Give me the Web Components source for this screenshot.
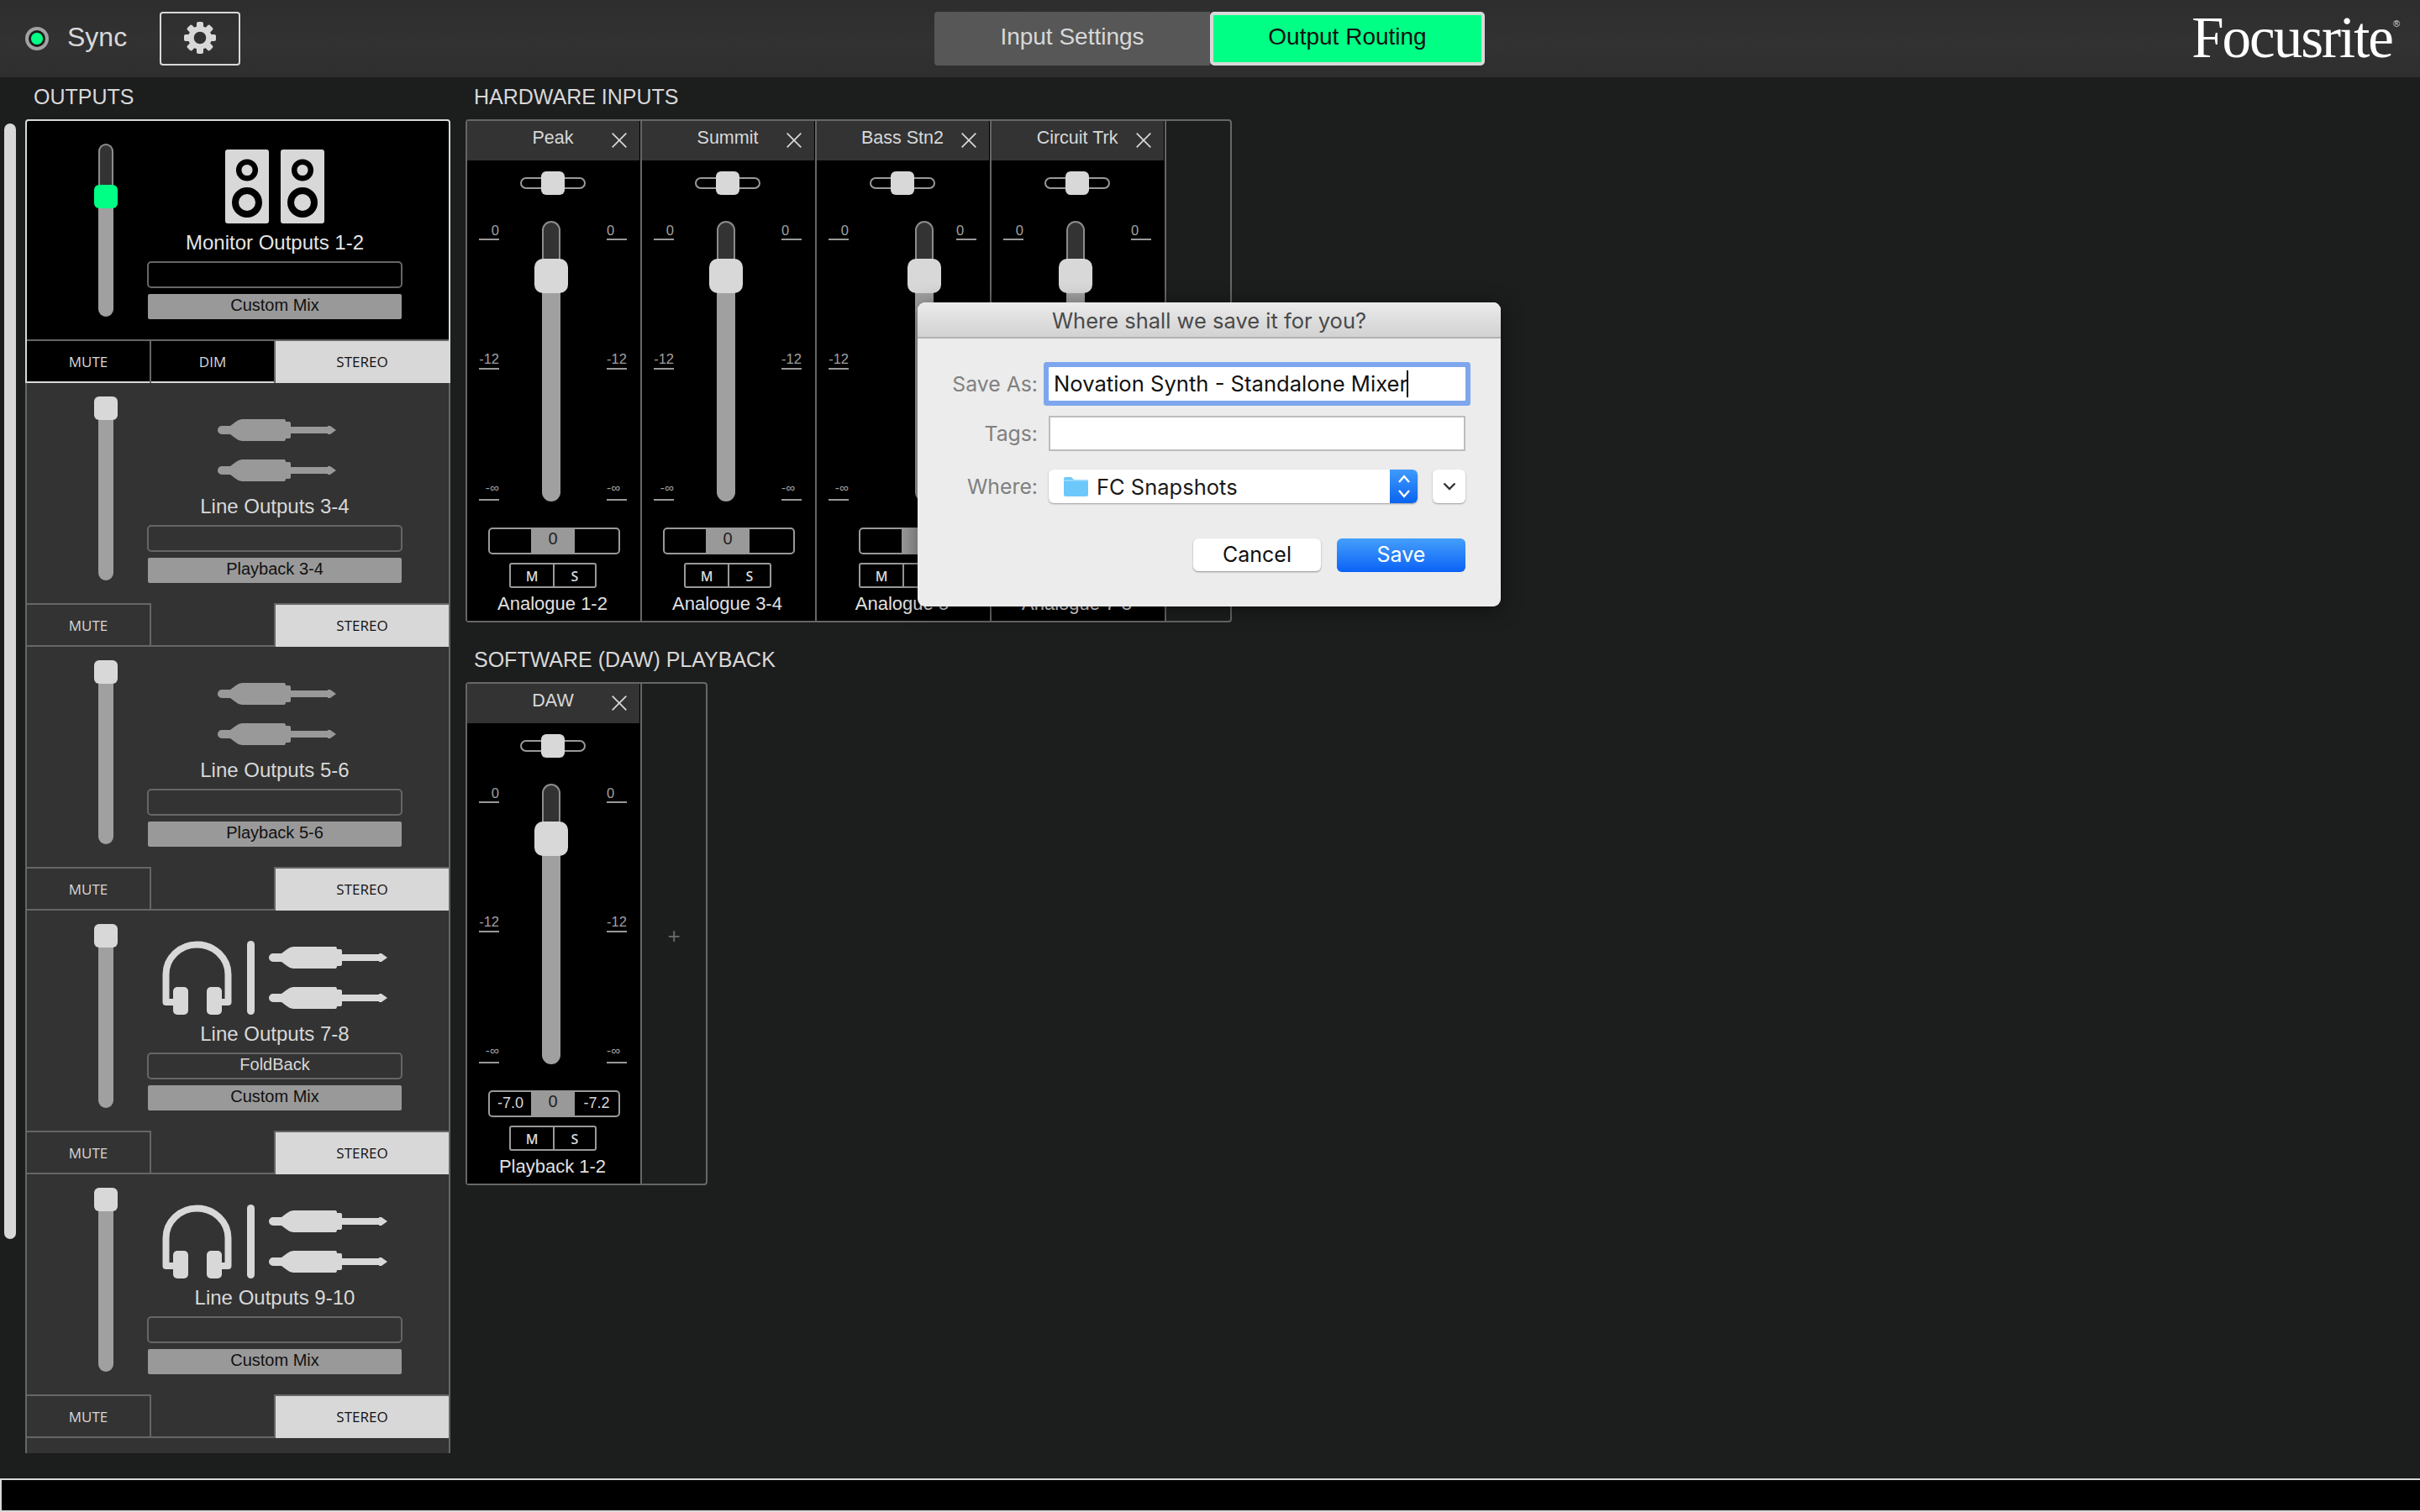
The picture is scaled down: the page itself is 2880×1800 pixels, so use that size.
<!DOCTYPE html>
<html lang="en">
<head>
<meta charset="utf-8">
<title>Focusrite Control</title>
<style>
html,body{margin:0;padding:0;background:#1c1d1d;}
body{width:2880px;height:1800px;overflow:hidden;position:relative;display:flex;flex-direction:column;font-family:"Liberation Sans",Arial,sans-serif;color:#d8d8d8;}
</style>
</head>
<body>
<fc-header></fc-header>
<fc-main>
  <fc-scroll slot="scroll"></fc-scroll>
  <fc-outputs slot="outputs">
    <fc-output name="Monitor Outputs 1-2" mix="Custom Mix" icon="speakers" selected thumb="49"></fc-output>
    <fc-output name="Line Outputs 3-4" mix="Playback 3-4" icon="jacks" dim></fc-output>
    <fc-output name="Line Outputs 5-6" mix="Playback 5-6" icon="jacks" dim></fc-output>
    <fc-output name="Line Outputs 7-8" mix="Custom Mix" box="FoldBack" icon="both"></fc-output>
    <fc-output name="Line Outputs 9-10" mix="Custom Mix" icon="both"></fc-output>
    <fc-output blank></fc-output>
  </fc-outputs>
  <fc-section slot="right" title="HARDWARE INPUTS" tail="76">
    <fc-channel name="Peak" label="Analogue 1-2"></fc-channel>
    <fc-channel name="Summit" label="Analogue 3-4"></fc-channel>
    <fc-channel name="Bass Stn2" label="Analogue 5" shift="28" balshift="25" covered="right"></fc-channel>
    <fc-channel name="Circuit Trk" label="Analogue 7-8" covered="all"></fc-channel>
  </fc-section>
  <fc-section slot="right" title="SOFTWARE (DAW) PLAYBACK" tail="76" add gap="71">
    <fc-channel name="DAW" label="Playback 1-2" lval="-7.0" rval="-7.2"></fc-channel>
  </fc-section>
</fc-main>
<fc-footer></fc-footer>
<fc-dialog></fc-dialog>

<script>
const GEAR = `<svg width="38" height="38" viewBox="-19 -19 38 38" fill="#d8d8d8">
  ${[0,45,90,135,180,225,270,315].map(a=>`<rect x="-4" y="-19" width="8" height="10" rx="2" transform="rotate(${a})"/>`).join('')}
  <circle r="10.6" fill="none" stroke="#d8d8d8" stroke-width="6.6"/></svg>`;
const JACK = c => `<svg width="141" height="26" viewBox="0 0 141 26" fill="${c}"><path d="M5 8H15L21 3.5Q25 0 29 0H79Q81 0 81 3H85Q87 3 87 5V9H131V8H134L141 13L134 18H131V17H87V21Q87 23 85 23H81Q81 26 79 26H29Q25 26 21 22.5L15 18H5A5 5 0 0 1 5 8Z"/></svg>`;
const SPEAKER = `<svg width="52" height="88" viewBox="0 0 52 88"><rect width="52" height="88" rx="3" fill="#d8d8d8"/>
  <circle cx="26" cy="24.500" r="9.800" fill="#d8d8d8" stroke="#000" stroke-width="6.500"/>
  <circle cx="26" cy="63" r="14" fill="#d8d8d8" stroke="#000" stroke-width="8"/></svg>`;
const PHONES = `<svg width="83" height="88" viewBox="0 0 83 88" fill="#d8d8d8"><path d="M18 73H4.500V40A37 35.500 0 0 1 78.500 40V73H65" fill="none" stroke="#d8d8d8" stroke-width="8" stroke-linejoin="round"/>
  <rect x="13" y="55" width="18" height="33" rx="5"/><rect x="53" y="55" width="18" height="33" rx="5"/></svg>`;
const CLOSE = `<svg width="18" height="18" viewBox="0 0 18 18" stroke="#d8d8d8" stroke-width="1.700" fill="none"><path d="M0.700 0.700L17.300 17.300M17.300 0.700L0.700 17.300"/></svg>`;

class Base extends HTMLElement{
  constructor(){super();this.attachShadow({mode:'open'});}
  connectedCallback(){this.shadowRoot.innerHTML=this.render();}
  a(n,d=''){return this.hasAttribute(n)?this.getAttribute(n):d;}
}

customElements.define('fc-header',class extends Base{render(){return `<style>
:host{display:grid;grid-template-columns:1112px 655px 1fr;height:92px;flex:none;background:linear-gradient(#2d2d2d,#323232 55%,#2e2e2e);font-family:"Liberation Sans",Arial,sans-serif;}
.left{display:flex;align-items:center;padding-left:30px;}
.led{box-sizing:border-box;width:28px;height:28px;border-radius:50%;border:4px solid #a2a2a2;background:radial-gradient(circle,#00ff85 6.500px,#1d1d1d 7.500px);}
.sync{font-size:32px;color:#d8d8d8;margin:-4px 0 0 22px;width:110px;}
.gear{box-sizing:border-box;width:96px;height:64px;border:2px solid #d8d8d8;border-radius:4px;display:flex;align-items:center;justify-content:center;margin-top:-1px;}
.gear svg{margin-left:-1px;margin-top:-1px;}
.tabs{display:grid;grid-template-columns:328px 327px;height:64px;align-self:center;margin-top:-1px;}
.tab{display:flex;align-items:center;justify-content:center;font-size:28px;padding-bottom:3px;box-sizing:border-box;}
.in{background:#575757;color:#d8d8d8;border-radius:4px 0 0 4px;}
.out{background:#00ff85;color:#111;border:4px solid #d8d8d8;border-radius:5px;}
.logo{display:flex;justify-content:flex-end;position:relative;padding-right:33px;}
.word{font-family:"Liberation Serif","Times New Roman",serif;font-size:69px;letter-spacing:-2px;color:#fff;line-height:92px;margin-top:-1px;}
.reg{font-size:11px;color:#ddd;font-family:"Liberation Sans",sans-serif;position:absolute;right:24px;top:22px;}
</style>
<div class="left"><div class="led"></div><div class="sync">Sync</div><div class="gear">${GEAR}</div></div>
<div class="tabs"><div class="tab in">Input Settings</div><div class="tab out">Output Routing</div></div>
<div class="logo"><span class="word">Focusrite</span><span class="reg">®</span></div>`;}});

customElements.define('fc-main',class extends Base{render(){return `<style>
:host{display:flex;flex:none;height:1668px;font-family:"Liberation Sans",Arial,sans-serif;}
.r{display:flex;flex-direction:column;margin-left:18px;}
</style><slot name="scroll"></slot><slot name="outputs"></slot><div class="r"><slot name="right"></slot></div>`;}});

customElements.define('fc-scroll',class extends Base{render(){return `<style>
:host{display:block;box-sizing:border-box;width:14px;height:1328px;margin:55px 11px 0 5px;background:#d8d8d8;border-radius:7px;flex:none;}
</style>`;}});

customElements.define('fc-outputs',class extends Base{render(){return `<style>
:host{display:block;width:506px;flex:none;}
h2{margin:0;height:50px;padding:9px 0 0 10px;box-sizing:border-box;font:400 25px/28px "Liberation Sans",Arial,sans-serif;color:#d8d8d8;}
.list{height:1588px;overflow:hidden;}
</style><h2>OUTPUTS</h2><div class="list"><slot></slot></div>`;}});

customElements.define('fc-fader',class extends Base{render(){
  const w=this.a('w',18),t=+this.a('thumb',-13),tw=this.a('tw',28),th=this.a('th',28),c=this.a('color','#d8d8d8'),r=this.a('r',6),h=this.a('h',206),sl=(+tw-+w)/2;
  const up=Math.max(t+ +th,0);
  return `<style>
:host{display:block;position:relative;width:${w}px;height:${h}px;flex:none;}
.top{box-sizing:border-box;height:${up}px;background:#333;border:2px solid #8c8c8c;border-bottom:0;border-radius:${w/2}px ${w/2}px 0 0;${up<=15?'display:none;':''}}
.fill{height:${h-(up<=15?15:up)}px;background:#a0a0a0;border-radius:0 0 ${w/2}px ${w/2}px;${up<=15?'margin-top:15px;':''}}
.thumb{position:absolute;left:${-sl}px;top:${t}px;width:${tw}px;height:${th}px;background:${c};border-radius:${r}px;}
</style><div class="top"></div><div class="fill"></div><div class="thumb"></div>`;}});

customElements.define('fc-output',class extends Base{render(){
  if(this.hasAttribute('blank')) return `<style>:host{display:block;box-sizing:border-box;height:314px;background:#333;border:solid #666;border-width:0 2px;}</style>`;
  const sel=this.hasAttribute('selected'),dim=this.hasAttribute('dim');
  const jc=dim?'#999':'#d8d8d8';
  const jacks=`<div class="jacks">${JACK(jc)}${JACK(jc)}</div>`;
  const icon={speakers:`<div class="spk">${SPEAKER}${SPEAKER}</div>`,jacks,both:`<div class="both">${PHONES}<div class="bar"></div>${jacks}</div>`}[this.a('icon')];
  return `<style>
:host{display:flex;flex-direction:column;box-sizing:border-box;height:314px;background:${sel?'#000':'#333'};border:solid ${sel?'#d8d8d8':'#666'};border-width:${sel?'2px':'0'} 2px 2px;font-family:"Liberation Sans",Arial,sans-serif;${sel?'border-radius:4px 4px 0 0;':''}}
.main{display:flex;flex:1;padding:${sel?27:29}px 0 0 85px;box-sizing:border-box;min-height:0;}
.info{width:304px;margin:${sel?-27:-29}px 0 0 40px;padding-top:${sel?34:36}px;display:flex;flex-direction:column;align-items:center;box-sizing:border-box;flex:none;}
.icon{height:88px;display:flex;align-items:center;justify-content:center;}
.spk{display:flex;gap:14px;}
.jacks{display:flex;flex-direction:column;gap:22px;${dim?'margin-left:5px;':''}}
.jacks svg,.spk svg,.both svg{display:block;}
.both{display:flex;align-items:center;gap:17px;}
.bar{width:9px;height:88px;background:#d8d8d8;border-radius:4.500px;margin-left:1px;}
.name{height:45px;line-height:45px;font-size:24px;color:${sel?'#e4e4e4':'#d8d8d8'};white-space:nowrap;}
.box{box-sizing:border-box;width:304px;height:32px;border:2px solid #666;border-radius:5px;text-align:center;font-size:20px;line-height:24px;color:#d8d8d8;}
.mix{box-sizing:border-box;width:302px;height:30px;margin-top:7px;background:#999;border-radius:2px;color:#111;text-align:center;font-size:20px;line-height:26px;}
.btns{display:grid;grid-template-columns:148px 146px 208px;height:50px;flex:none;font:400 17px/50px "Open Sans",sans-serif;text-align:center;${sel?'box-shadow:inset 0 2px 0 #666;':''}}
.b{box-sizing:border-box;}
.m{border-top:2px solid #666;border-right:2px solid #666;color:#d8d8d8;}
.d{color:#d8d8d8;border-top:2px solid ${sel?'#666':'transparent'};}
.s{border-top:2px solid #666;border-left:2px solid #666;background:#d8d8d8;color:#111;}
</style>
<div class="main"><fc-fader thumb="${this.a('thumb','-13')}" color="${sel?'#00ff85':'#d8d8d8'}"></fc-fader>
<div class="info"><div class="icon">${icon}</div><div class="name">${this.a('name')}</div><div class="box">${this.a('box')}</div><div class="mix">${this.a('mix')}</div></div></div>
<div class="btns"><div class="b m">MUTE</div><div class="b d">${sel?'DIM':''}</div><div class="b s">STEREO</div></div>`;}});

customElements.define('fc-section',class extends Base{render(){
  const g=+this.a('gap',50);
  return `<style>
:host{display:block;}
h2{margin:0;height:${g}px;box-sizing:border-box;padding:${g-41}px 0 0 10px;font:400 25px/28px "Liberation Sans",Arial,sans-serif;color:#d8d8d8;white-space:nowrap;}
.box{display:inline-flex;box-sizing:border-box;border:2px solid #666;border-radius:4px;height:599px;}
.tail{width:${this.a('tail')}px;display:flex;align-items:center;justify-content:center;color:#6a6a6a;font-size:26px;padding-top:6px;box-sizing:border-box;}
</style><h2>${this.a('title')}</h2><div class="box"><slot></slot><div class="tail">${this.hasAttribute('add')?'+':''}</div></div>`;}});

customElements.define('fc-scale',class extends Base{render(){
  const al=this.a('side')==='l'?'right':'left',low=!this.hasAttribute('nolow');
  return `<style>
:host{display:block;width:24px;flex:none;font:400 16.500px/16px "Liberation Sans",Arial,sans-serif;color:#a0a0a0;text-align:${al};}
div{box-sizing:border-box;border-bottom:2px solid #999;display:flex;flex-direction:column;justify-content:flex-end;padding-bottom:3px;}
.inf{font-size:15.500px;padding-bottom:5px;}
</style><div style="height:23px;padding-bottom:2px">0</div><div style="height:154px">${low?'-12':''}</div><div class="inf" style="height:156px">${low?'-∞':''}</div>`;}});

customElements.define('fc-channel',class extends Base{render(){
  const shift=+this.a('shift',0),bal=+this.a('balshift',0),cov=this.a('covered'),all=cov==='all';
  return `<style>
:host{display:block;box-sizing:border-box;width:208px;height:595px;background:#000;border-right:2px solid #666;font-family:"Liberation Sans",Arial,sans-serif;flex:none;}
.hd{display:grid;grid-template-columns:1fr auto 1fr;height:47px;background:#333;margin-right:1px;color:#d8d8d8;font-size:21.500px;line-height:40px;}
.hd span{grid-column:2;white-space:nowrap;margin-left:-1px;}
.x{grid-column:3;justify-self:end;margin:14px 15px 0 0;line-height:0;}
.pan{position:relative;height:28px;width:78px;margin:13px 0 0 63px;display:flex;align-items:center;}
.pan i{display:block;box-sizing:border-box;width:78px;height:14px;border:2px solid #999;border-radius:7px;}
.pan b{position:absolute;left:25px;top:0;width:28px;height:28px;border-radius:6px;background:#d8d8d8;}
.mid{display:flex;margin-top:31px;padding-left:14px;height:334px;}
.fd{width:128px;flex:none;padding-left:${51+shift}px;box-sizing:border-box;}
.bal{display:grid;grid-template-columns:49px 52px 1fr;box-sizing:border-box;width:157px;height:32px;margin:31px 0 0 ${25+bal}px;border:2px solid #999;border-radius:5px;color:#d8d8d8;font-size:18px;line-height:26px;text-align:center;}
.bal .c{background:#999;color:#222;font-size:20px;line-height:23px;}
.ms{display:grid;grid-template-columns:1fr 1fr;box-sizing:border-box;width:104px;height:30px;margin:10px 0 0 50px;border:2px solid #999;border-radius:3px;font:600 16px/28px "Open Sans",sans-serif;color:#d8d8d8;text-align:center;}
.ms div+div{border-left:2px solid #999;}
.nm{text-align:center;color:#e0e0e0;font-size:22px;line-height:37px;white-space:nowrap;padding-right:3px;}
</style>
<div class="hd"><span>${this.a('name')}</span><div class="x">${CLOSE}</div></div>
<div class="pan"><i></i><b></b></div>
<div class="mid"><fc-scale side="l" ${all?'nolow':''}></fc-scale><div class="fd"><fc-fader w="22" tw="40" th="41" r="10" h="334" thumb="45"></fc-fader></div><fc-scale side="r" ${cov?'nolow':''}></fc-scale></div>
<div class="bal"><div>${this.a('lval')}</div><div class="c">${cov?'':'0'}</div><div>${this.a('rval')}</div></div>
<div class="ms"><div>${all?'':'M'}</div><div>${cov?'':'S'}</div></div>
<div class="nm">${this.a('label')}</div>`;}});

customElements.define('fc-footer',class extends Base{render(){return `<style>
:host{display:block;box-sizing:border-box;height:40px;background:#000;border:2px solid #d8d8d8;border-right:0;flex:none;}
</style>`;}});

customElements.define('fc-dialog',class extends Base{render(){
  const F=`"Inter","Open Sans",sans-serif`;
  return `<style>
:host{position:absolute;left:1092px;top:360px;width:694px;height:362px;background:#ececec;border-radius:9px;box-shadow:0 4px 26px rgba(0,0,0,.45);overflow:hidden;font-family:${F};display:block;}
.title{box-sizing:border-box;height:43px;background:linear-gradient(#ebebeb,#d2d2d2);border-bottom:2px solid #b2b2b2;text-align:center;font-size:25.500px;line-height:44px;color:#4a4a4a;}
.form{display:grid;grid-template-columns:143px 496px;column-gap:13px;padding-top:34px;align-items:center;}
label{text-align:right;font-size:24.800px;color:#808080;line-height:32px;}
.input{box-sizing:border-box;background:#fff;height:40px;font-size:25.600px;color:#111;line-height:40px;padding-left:6px;box-shadow:0 0 0 6px #7ea6ee;border-radius:1px;white-space:nowrap;}
.input i{display:inline-block;width:2px;height:32px;background:#000;vertical-align:-7px;margin-left:-1px;}
.tags{box-sizing:border-box;background:#fff;height:42px;border:2px solid #bdbdbd;margin-top:18px;}
.tl{margin-top:18px;}
.wl{margin-top:22px;}
.wh{display:flex;justify-content:space-between;margin-top:22px;height:40px;}
.pop{display:flex;width:439px;background:#fff;border-radius:6px;box-shadow:0 1px 2px rgba(0,0,0,.35);overflow:hidden;align-items:center;}
.pop .fo{margin-left:17px;line-height:0;}
.pop span{flex:1;margin-left:10px;font-size:25.500px;color:#1a1a1a;}
.pop .ud{width:33px;height:40px;background:linear-gradient(#3f9bfc,#0a63f0);display:flex;align-items:center;justify-content:center;}
.more{width:39px;border-radius:6px;background:#fff;box-shadow:0 1px 2px rgba(0,0,0,.35);display:flex;align-items:center;justify-content:center;}
.btns{display:flex;justify-content:flex-end;gap:19px;margin:42px 42px 0 0;}
.btn{box-sizing:border-box;width:152px;height:39px;border-radius:6px;background:#fff;box-shadow:0 1px 2px rgba(0,0,0,.4);text-align:center;font-size:25px;line-height:39px;color:#111;}
.save{width:153px;height:40px;background:linear-gradient(#459ffc,#0a63f5);color:#fff;box-shadow:none;}
</style>
<div class="title">Where shall we save it for you?</div>
<div class="form">
 <label>Save As:</label><div class="input">Novation Synth - Standalone Mixer<i></i></div>
 <label class="tl">Tags:</label><div class="tags"></div>
 <label class="wl">Where:</label>
 <div class="wh"><div class="pop"><div class="fo"><svg width="30" height="24" viewBox="0 0 30 24"><path d="M1 3Q1 1 3 1H10L13 4H28Q30 4 30 6V22Q30 24 28 24H3Q1 24 1 22Z" fill="#6cc8fb"/><path d="M1 5H30" stroke="#a7defc" stroke-width="1.500"/></svg></div><span>FC Snapshots</span><div class="ud"><svg width="16" height="28" viewBox="0 0 16 28" fill="none" stroke="#fff" stroke-width="2.400"><path d="M2 9L8 2L14 9M2 19L8 26L14 19"/></svg></div></div>
 <div class="more"><svg width="16" height="10" viewBox="0 0 16 10" fill="none" stroke="#333" stroke-width="2.400"><path d="M1.500 1.500L8 8L14.500 1.500"/></svg></div></div>
</div>
<div class="btns"><div class="btn">Cancel</div><div class="btn save">Save</div></div>`;}});
</script>
</body>
</html>
